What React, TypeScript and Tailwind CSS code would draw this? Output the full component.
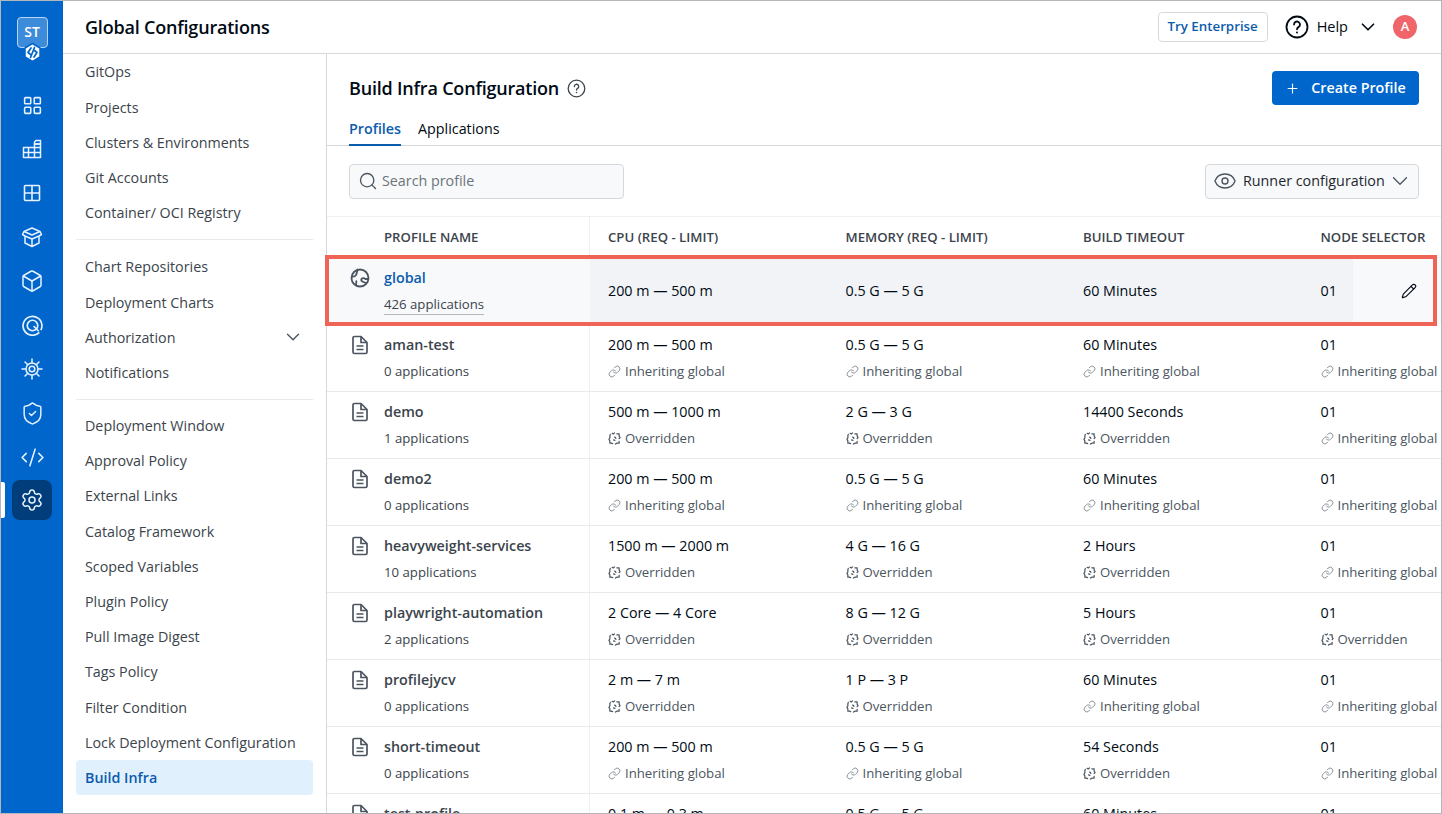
import { ChevronDown, CodeXml, Eye, Box, LayoutGrid, Link, Pencil, Plus, Search, Settings, ShieldCheck } from "lucide-react";

const ink = "text-[#000a14]";

function StairsIcon() {
  return (
    <svg width="20" height="20" viewBox="0 0 20 20" fill="none" stroke="currentColor" strokeWidth="1.5" strokeLinejoin="round">
      <path d="M1.5 8.5h11v-3.5h6v13.500h-17z" />
      <path d="M1.5 13.500h17M6.500 8.500v10M12.500 8.500v10M12.500 8.500h6M14 1.500h4.500v3.500h-6v-2z" />
    </svg>
  );
}

function PanesIcon() {
  return (
    <svg width="18" height="18" viewBox="0 0 18 18" fill="none" stroke="currentColor" strokeWidth="1.6">
      <rect x="1.500" y="1.500" width="15" height="15" rx="1" />
      <path d="M9 1.500v15M1.500 9h15" />
    </svg>
  );
}

function StackBoxIcon() {
  return (
    <svg width="22" height="22" viewBox="0 0 22 22" fill="none" stroke="currentColor" strokeWidth="1.5" strokeLinejoin="round">
      <path d="M11 2l8 3.500-8 3.500-8-3.500z" />
      <path d="M3 5.500L1.500 8.500 4 10l7 3 7-3 2.500-1.500L19 5.500" />
      <path d="M4 10v7l7 3.500 7-3.500v-7M11 13v7.500" />
    </svg>
  );
}

function TargetIcon() {
  return (
    <svg width="21" height="21" viewBox="0 0 20 20" fill="none" stroke="currentColor" strokeWidth="1.6">
      <path d="M16.500 16.500A9 9 0 1 1 19 10c0 2-.5 3.500-1 4.500" />
      <circle cx="10" cy="10" r="5" />
      <path d="M11 10.500l5 5" />
    </svg>
  );
}

function HelmIcon() {
  return (
    <svg width="22" height="22" viewBox="0 0 22 22" fill="none" stroke="currentColor" strokeWidth="1.5" strokeLinecap="round">
      <circle cx="11" cy="11" r="6" />
      <circle cx="11" cy="11" r="2.800" />
      <path d="M11 1v4M11 17v4M1 11h4M17 11h4M4 4l2.800 2.800M15.200 15.200L18 18M18 4l-2.800 2.800M6.800 15.200L4 18" />
    </svg>
  );
}

function LogoMark() {
  return (
    <svg width="21" height="21" viewBox="0 0 21 21" className="absolute left-[5px] top-[25px]">
      <path d="M10.500 1.500L18 6v9l-7.500 4.500L3 15V6z" fill="white" stroke="#0066cc" strokeWidth="1.500" strokeLinejoin="round" />
      <path d="M9 6L6 10.500l2.500 2M12 15l3-4.500-2.500-2M12.500 5.500L8.500 15.500" fill="none" stroke="#0066cc" strokeWidth="1.700" strokeLinecap="round" strokeLinejoin="round" />
    </svg>
  );
}

function DocIcon() {
  return (
    <svg width="20" height="20" viewBox="0 0 20 20" fill="none" stroke="#4b5560" strokeWidth="1.700" strokeLinejoin="round" className="shrink-0">
      <path d="M3 3a1.500 1.500 0 0 1 1.500-1.500H11L17 7.500V17a1.500 1.500 0 0 1-1.500 1.500h-11A1.500 1.500 0 0 1 3 17z" />
      <path d="M11 1.500v6h6M6.500 11h7M6.500 14.500h7" />
    </svg>
  );
}

function OverriddenIcon() {
  return (
    <svg width="13" height="13" viewBox="0 0 14 14" fill="none" stroke="#4b5560" strokeWidth="1.300" strokeLinecap="round" strokeLinejoin="round" className="shrink-0">
      <path d="M4.500 1.500l1.500.5L7 1M9.500 2H12v2.500l1 1.500-1 1M12 10v2H9.500L8 13M5 12.500L3.500 12H2V9.500L1 8l1-1.500V4l.5-1.500" />
      <path d="M7 5.500a1.500 1.500 0 0 1 1.500 1.500M6 8.500l1.500.5" />
    </svg>
  );
}

function GlobalIcon() {
  return (
    <svg width="20" height="20" viewBox="0 0 20 20" fill="none" stroke="#4b5560" strokeWidth="1.800" strokeLinejoin="round" className="shrink-0">
      <circle cx="10" cy="10" r="8.500" />
      <path d="M2 8.500c2 .5 3 0 4-1.500s.5-3 2-6M18.500 11h-3c-1.500-1-3-1.500-4 0s.5 2.500 2 3l2.500 1M6 17c0-2 1-3 0-4.500" />
    </svg>
  );
}

const railIcons = [
  <LayoutGrid key="a" size={21} strokeWidth={1.8} />,
  <StairsIcon key="b" />,
  <PanesIcon key="c" />,
  <StackBoxIcon key="d" />,
  <Box key="e" size={24} strokeWidth={1.5} />,
  <TargetIcon key="f" />,
  <HelmIcon key="g" />,
  <ShieldCheck key="h" size={25} strokeWidth={1.4} />,
  <CodeXml key="i" size={25} strokeWidth={1.5} />,
];

const navGroups = [
  ["GitOps", "Projects", "Clusters & Environments", "Git Accounts", "Container/ OCI Registry"],
  ["Chart Repositories", "Deployment Charts", "Authorization", "Notifications"],
  ["Deployment Window", "Approval Policy", "External Links", "Catalog Framework", "Scoped Variables", "Plugin Policy", "Pull Image Digest", "Tags Policy", "Filter Condition", "Lock Deployment Configuration", "Build Infra"],
];

type Cell = { value: string; over?: boolean };
type Row = { name: string; apps: string; cells: Cell[] };

const c = (value: string, over?: boolean): Cell => ({ value, over });

const rows: Row[] = [
  { name: "aman-test", apps: "0 applications", cells: [c("200 m — 500 m"), c("0.5 G — 5 G"), c("60 Minutes"), c("01")] },
  { name: "demo", apps: "1 applications", cells: [c("500 m — 1000 m", true), c("2 G — 3 G", true), c("14400 Seconds", true), c("01")] },
  { name: "demo2", apps: "0 applications", cells: [c("200 m — 500 m"), c("0.5 G — 5 G"), c("60 Minutes"), c("01")] },
  { name: "heavyweight-services", apps: "10 applications", cells: [c("1500 m — 2000 m", true), c("4 G — 16 G", true), c("2 Hours", true), c("01")] },
  { name: "playwright-automation", apps: "2 applications", cells: [c("2 Core — 4 Core", true), c("8 G — 12 G", true), c("5 Hours", true), c("01", true)] },
  { name: "profilejycv", apps: "0 applications", cells: [c("2 m — 7 m", true), c("1 P — 3 P", true), c("60 Minutes"), c("01")] },
  { name: "short-timeout", apps: "0 applications", cells: [c("200 m — 500 m"), c("0.5 G — 5 G"), c("54 Seconds", true), c("01")] },
  { name: "test-profile", apps: "0 applications", cells: [c("0.1 m — 0.3 m", true), c("0.5 G — 5 G"), c("60 Minutes"), c("01")] },
];

const gridCols = "grid grid-cols-[263px_237.5px_237.5px_237.5px_237.5px]";

export default function App() {
  return (
    <div className={`relative flex h-[814px] w-[1442px] overflow-hidden border border-[#b4b7ba] bg-white font-['Open_Sans',sans-serif] ${ink}`}>
      {/* Icon rail */}
      <aside className="flex w-[62px] shrink-0 flex-col items-center bg-[#0066cc] text-[#e6f2ff]">
        <div className="relative mt-[16px] h-[46px] w-[31px]">
          <div className="flex h-[31px] w-[31px] items-center justify-center rounded-[4px] border border-[#b5d5f5] bg-[#3d8bdb] pb-[3px] text-[14px] font-semibold text-white">ST</div>
          <LogoMark />
        </div>
        <div className="mt-[20px] flex w-full flex-col items-center">
          {railIcons.map((icon, i) => (
            <div key={i} className="flex h-[44px] w-full items-center justify-center">{icon}</div>
          ))}
        </div>
        <div className="relative mt-[1px] flex h-[40px] w-full items-center justify-center">
          <div className="absolute left-0 top-[2px] h-[36px] w-[4px] rounded-r-[2px] bg-white" />
          <div className="flex h-[40px] w-[40px] items-center justify-center rounded-[8px] bg-[#003d7a]">
            <Settings size={24} strokeWidth={1.5} />
          </div>
        </div>
      </aside>

      <div className="flex min-w-0 flex-1 flex-col">
        {/* Top bar */}
        <header className="flex h-[53px] shrink-0 items-center justify-between border-b border-[#d6d9dc] pl-[22px] pr-[24px]">
          <h1 className="text-[18px] font-semibold tracking-[-0.2px]">Global Configurations</h1>
          <div className="flex items-center">
            <button className="flex h-[30px] w-[110px] items-center justify-center rounded-[4px] border border-[#d6d9dc] text-[13.300px] font-semibold text-[#0b5cad]">Try Enterprise</button>
            <svg width="24" height="24" viewBox="0 0 24 24" fill="none" stroke="#000a14" strokeWidth="1.800" className="ml-[17px]">
              <circle cx="12" cy="12" r="10.500" />
              <path d="M9 9.500a3 3 0 1 1 4.500 2.600c-1 .6-1.500 1.100-1.500 2.200" strokeLinecap="round" />
              <circle cx="12" cy="17.500" r="1" fill="#000a14" stroke="none" />
            </svg>
            <span className="ml-[8px] text-[14.500px]">Help</span>
            <ChevronDown size={22} strokeWidth={1.800} className="ml-[9px]" />
            <div className="ml-[14px] flex h-[24px] w-[24px] items-center justify-center rounded-full bg-[#f0656a] text-[13px] font-semibold text-white">A</div>
          </div>
        </header>

        <div className="flex min-h-0 flex-1">
          {/* Section nav */}
          <nav className="flex w-[264px] shrink-0 flex-col border-r border-[#d6d9dc] px-[13px] pt-[0.5px]">
            {navGroups.map((group, g) => (
              <div key={g} className={g === 0 ? "mb-[9px] border-b border-[#e9eaec] pb-[9px]" : g === 1 ? "mb-[8px] border-b border-[#e9eaec] pb-[9px]" : ""}>
                {group.map((item) => {
                  const active = item === "Build Infra";
                  return (
                    <div
                      key={item}
                      className={`flex h-[35.200px] items-center justify-between rounded-[4px] pl-[9px] pr-[9px] text-[14.300px] ${active ? "bg-[#e1f0fd] font-semibold text-[#0b5cad]" : "text-[#3b444c]"}`}
                    >
                      <span>{item}</span>
                      {item === "Authorization" && <ChevronDown size={22} strokeWidth={1.500} className="text-[#4b5560]" />}
                    </div>
                  );
                })}
              </div>
            ))}
          </nav>

          {/* Main */}
          <main className="min-w-0 flex-1 overflow-hidden">
            <div className="flex items-start justify-between pl-[22px] pr-[22px] pt-[17px]">
              <div className="flex items-center pt-[4px]">
                <h2 className="text-[18px] font-semibold tracking-[-0.2px]">Build Infra Configuration</h2>
                <svg width="19" height="19" viewBox="0 0 19 19" fill="none" stroke="#3b444c" strokeWidth="1.300" className="ml-[8px]">
                  <circle cx="9.500" cy="9.500" r="8.300" />
                  <path d="M7.300 7.500a2.200 2.200 0 1 1 3.300 1.900c-.7.400-1.100.8-1.100 1.600" strokeLinecap="round" />
                  <circle cx="9.500" cy="13.500" r=".8" fill="#3b444c" stroke="none" />
                </svg>
              </div>
              <button className="flex h-[34px] w-[147px] items-center justify-center gap-[11px] rounded-[4px] bg-[#0066cc] text-[14.300px] font-semibold text-white">
                <Plus size={15} strokeWidth={1.800} />
                Create Profile
              </button>
            </div>

            <div className="mt-[5px] flex h-[36px] items-start gap-[17px] border-b border-[#d6d9dc] pl-[22px] pt-[7px] text-[14.300px]">
              <span className="h-[29px] border-b-2 border-[#0b5cad] font-semibold leading-[24px] text-[#0b5cad]">Profiles</span>
              <span className="leading-[24px]">Applications</span>
            </div>

            <div className="flex h-[71px] items-center justify-between border-b border-[#eef0f2] pl-[22px] pr-[22px]">
              <div className="flex h-[35px] w-[275px] items-center gap-[4px] rounded-[4px] border border-[#d6d9dc] bg-[#f8f9fa] pl-[8px] text-[14.300px] text-[#6b747c]">
                <Search size={20} strokeWidth={1.600} className="text-[#4b5560]" />
                Search profile
              </div>
              <div className="flex h-[35px] w-[214px] items-center rounded-[4px] border border-[#d6d9dc] bg-[#f8f9fa] pl-[7px] text-[14.300px]">
                <Eye size={24} strokeWidth={1.400} className="text-[#4b5560]" />
                <span className="ml-[6px] text-[#1e2730]">Runner configuration</span>
                <ChevronDown size={26} strokeWidth={1.200} className="ml-[2px] text-[#4b5560]" />
              </div>
            </div>

            {/* Table */}
            <div className="w-[1250px]">
              <div className={`${gridCols} h-[41px] items-center border-b border-[#eef0f2] text-[13.200px] font-semibold text-[#3b444c]`}>
                <div className="flex h-full items-center border-r border-[#eef0f2] pl-[57px] pt-[1px]">PROFILE NAME</div>
                {["CPU (REQ - LIMIT)", "MEMORY (REQ - LIMIT)", "BUILD TIMEOUT", "NODE SELECTOR"].map((h) => (
                  <div key={h} className="whitespace-nowrap pl-[18px] pt-[1px]">{h}</div>
                ))}
              </div>

              <div className={`${gridCols} relative h-[67px] bg-[#f1f3f7] text-[14.300px]`}>
                <div className="flex bg-[#f8f9fb] pl-[23px] pt-[10px]">
                  <GlobalIcon />
                  <div className="ml-[14px]">
                    <div className="font-semibold leading-[20px] text-[#0b5cad]">global</div>
                    <div className="mt-[6px] border-b border-[#b4b7ba] text-[13.200px] leading-[20px] text-[#3b444c]">426 applications</div>
                  </div>
                </div>
                {["200 m — 500 m", "0.5 G — 5 G", "60 Minutes", "01"].map((v) => (
                  <div key={v} className="flex items-center pb-[2px] pl-[18px]">{v}</div>
                ))}
                <div className="absolute left-[1026px] top-0 flex h-full w-[89px] items-center justify-end bg-[#f8f9fb] pb-[2px] pr-[25px]">
                  <Pencil size={16} strokeWidth={1.700} />
                </div>
              </div>

              {rows.map((row) => (
                <div key={row.name} className={`${gridCols} h-[67px] border-b border-[#e9eaec]`}>
                  <div className="flex border-r border-[#eef0f2] pl-[23px] pt-[10px]">
                    <DocIcon />
                    <div className="ml-[14px]">
                      <div className="text-[14.300px] font-semibold leading-[20px] text-[#3b444c]">{row.name}</div>
                      <div className="mt-[6px] text-[13.200px] leading-[20px] text-[#3b444c]">{row.apps}</div>
                    </div>
                  </div>
                  {row.cells.map((cell, i) => (
                    <div key={i} className="pl-[18px] pt-[10px]">
                      <div className="text-[14.300px] leading-[20px]">{cell.value}</div>
                      <div className="mt-[6px] flex items-center gap-[4px] whitespace-nowrap text-[13.200px] leading-[20px] text-[#4b5560]">
                        {cell.over ? <OverriddenIcon /> : <Link size={13} strokeWidth={1.300} className="shrink-0 text-[#5b6670]" />}
                        {cell.over ? "Overridden" : "Inheriting global"}
                      </div>
                    </div>
                  ))}
                </div>
              ))}
            </div>
          </main>
        </div>
      </div>

      {/* Highlight annotation drawn over the screenshot */}
      <div className="pointer-events-none absolute left-[324px] top-[254px] h-[71px] w-[1112px] border-[4px] border-[#ee6558]" />
    </div>
  );
}
